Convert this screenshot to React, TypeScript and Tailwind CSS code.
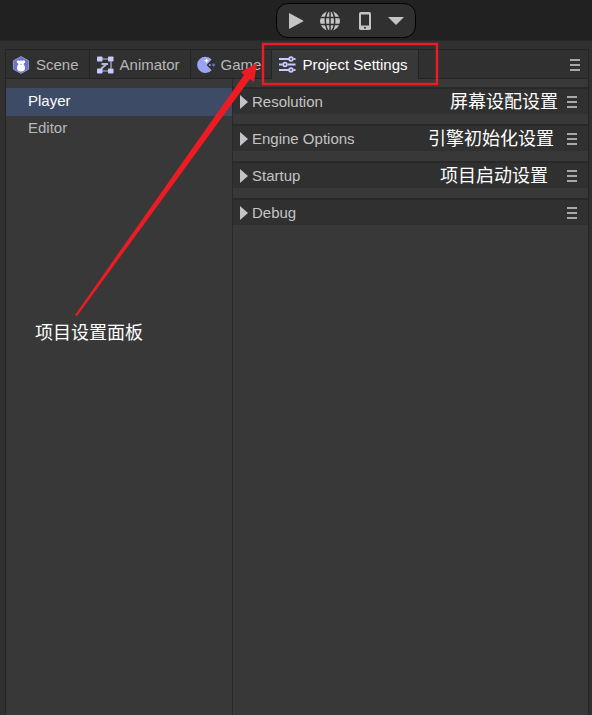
import React, { useState } from "react";

const SceneIcon = () => (
  <svg viewBox="0 0 18 18" className="size-[18px] shrink-0" aria-hidden="true">
    <path d="M9 0.6 16.6 4.8V13.2L9 17.4 1.4 13.2V4.8Z" fill="#6b76c4" stroke="#8f96cf" strokeWidth="1" />
    <circle cx="6.3" cy="5.8" r="1.5" fill="#fff" />
    <circle cx="11.7" cy="5.8" r="1.5" fill="#fff" />
    <circle cx="9" cy="7.4" r="2.9" fill="#fff" />
    <ellipse cx="9" cy="11.8" rx="4" ry="3.8" fill="#fff" />
    <path d="M9 7.4 10 8.6H8Z" fill="#6b76c4" />
  </svg>
);

const AnimatorIcon = () => (
  <svg viewBox="0 0 18 18" className="size-[18px] shrink-0" aria-hidden="true">
    <g stroke="#b6b9dc" strokeWidth="1.2" fill="none">
      <path d="M6 3H12M15 5.5V12.5M6 15H12" />
      <path d="M5.5 8H12M10.5 8 5 13" strokeWidth="1.8" />
    </g>
    <g fill="#c6caff">
      <rect x="1" y="0.5" width="5.5" height="5" rx=".8" />
      <rect x="12" y="0.5" width="5.5" height="5" rx=".8" />
      <rect x="1" y="12.5" width="5.5" height="5" rx=".8" />
      <rect x="12" y="12.5" width="5.5" height="5" rx=".8" />
    </g>
  </svg>
);

const GameIcon = () => (
  <svg viewBox="0 0 18 18" className="size-[18px] shrink-0" aria-hidden="true">
    <path d="M14.6 3.6A8.2 8.2 0 1 0 14.6 14.2L9.6 9Z" fill="#9ba3f5" />
    <path d="M9.5 2 10.2 4.1 12.1 4.8 10.2 5.5 9.5 7.6 8.8 5.5 6.9 4.8 8.8 4.1Z" fill="#fff" />
    <circle cx="12.8" cy="9" r="1" fill="#9ba3f5" />
    <circle cx="16.6" cy="9" r="1.4" fill="#7078b8" />
  </svg>
);

const SlidersIcon = () => (
  <svg viewBox="0 0 18 18" className="size-[18px] shrink-0" aria-hidden="true">
    <g stroke="#c6caff" strokeWidth="1.8" fill="none">
      <path d="M1 3H11M15.5 3H17.5M1 8.5H4.5M9.5 8.5H17.5M1 14H11M15.5 14H17.5" />
      <circle cx="13" cy="3" r="1.8" />
      <circle cx="7" cy="8.5" r="1.8" />
      <circle cx="13" cy="14" r="1.8" />
    </g>
  </svg>
);

const MenuButton = ({ label }: { label: string }) => (
  <button aria-label={label} className="flex size-5 shrink-0 items-center justify-center text-[#cfcfcf]">
    <svg viewBox="0 0 10 12" className="h-3 w-[10px]" stroke="currentColor" strokeWidth="1.6" aria-hidden="true">
      <path d="M0 1H10M0 6H10M0 11H10" />
    </svg>
  </button>
);

const tabs = [
  { name: "Scene", Icon: SceneIcon },
  { name: "Animator", Icon: AnimatorIcon },
  { name: "Game", Icon: GameIcon },
  { name: "Project Settings", Icon: SlidersIcon },
];

const sections = [
  { name: "Resolution", note: "屏幕设配设置", place: "mr-1" },
  { name: "Engine Options", note: "引擎初始化设置", place: "mr-2" },
  { name: "Startup", note: "项目启动设置", place: "mr-3.5" },
  { name: "Debug", note: "", place: "" },
];

function Toolbar() {
  return (
    <header className="flex h-[41px] justify-center border-b border-[#292929] bg-[#212121] pt-[3px] pl-[100px]">
      <div className="flex h-[35px] items-center rounded-xl border border-black bg-[#303030] px-[9px] text-[#c4c4c4]">
        <button aria-label="Play" className="mr-[13px] flex size-5 items-center justify-center">
          <svg viewBox="0 0 16 18" className="h-[18px] w-4" fill="currentColor">
            <path d="M1 1 15 8.5Q15.8 9 15 9.5L1 17Z" />
          </svg>
        </button>
        <button aria-label="Preview in browser" className="mr-[14px] flex size-[22px] items-center justify-center">
          <svg viewBox="0 0 20 20" className="size-5">
            <circle cx="10" cy="10" r="10" fill="currentColor" />
            <g fill="none" stroke="#303030" strokeWidth="1.5">
              <ellipse cx="10" cy="10" rx="4.7" ry="10.5" />
              <path d="M10 0V20M0 6.5H20M0 13.5H20" />
            </g>
          </svg>
        </button>
        <button aria-label="Preview on phone" className="mr-[11px] flex size-5 items-center justify-center">
          <svg viewBox="0 0 12 18" className="h-[18px] w-3">
            <rect width="12" height="18" rx="1.8" fill="currentColor" />
            <path d="M2 2.5H10V13.5H2Z" fill="#303030" />
            <circle cx="6" cy="15.8" r="1" fill="#303030" />
          </svg>
        </button>
        <button aria-label="More previews" className="flex size-5 items-center justify-center">
          <svg viewBox="0 0 16 8" className="h-2 w-4" fill="currentColor">
            <path d="M0 0H16L8 8Z" />
          </svg>
        </button>
      </div>
    </header>
  );
}

export default function App() {
  const [active, setActive] = useState("Project Settings");
  const [page, setPage] = useState("Player");
  return (
    <div className="relative flex min-h-screen flex-col bg-[#303030] font-['Liberation_Sans','Noto_Sans_CJK_SC',sans-serif] text-[15px] leading-5 text-[#b8b8b8]">
      <Toolbar />
      <main className="mr-[3px] ml-[5px] mt-2 flex flex-1 flex-col border-x border-t border-[#242424]">
        <div className="flex h-[29px] bg-[#303030]">
          <nav className="flex">
            {tabs.map(({ name, Icon }) => (
              <button
                key={name}
                onClick={() => setActive(name)}
                className={
                  "flex items-center gap-[6px] border-r border-[#242424] pr-[10px] pl-[6px] whitespace-nowrap " +
                  (active === name ? "bg-[#383838] text-white" : "border-b pt-px")
                }
              >
                <Icon />
                {name}
              </button>
            ))}
          </nav>
          <div className="flex flex-1 items-center justify-end border-b border-[#242424] pt-px pr-[3px]">
            <MenuButton label="Panel menu" />
          </div>
        </div>
        <div className="flex flex-1 bg-[#383838]">
          <aside className="flex w-[227px] shrink-0 flex-col border-r border-[#292929] pt-[9px]">
            {["Player", "Editor"].map((name) => (
              <button
                key={name}
                onClick={() => setPage(name)}
                className={
                  "flex items-center pl-[22px] " +
                  (page === name ? "h-7 bg-[#3d4b66] pb-0.5 text-white" : "h-6")
                }
              >
                {name}
              </button>
            ))}
          </aside>
          <div className="flex min-w-0 flex-1 flex-col gap-[10px] pt-2">
            {sections.map(({ name, note, place }) => (
              <section
                key={name}
                className="flex h-[27px] items-center border-t-2 border-[#292929] bg-[#303030] pr-[6px] pl-[7px]"
              >
                <button className="flex flex-1 items-center gap-1 text-left text-[#c4c4c4]">
                  <svg viewBox="0 0 8 14" className="h-[14px] w-2" fill="currentColor" aria-hidden="true">
                    <path d="M0 0 8 7 0 14Z" />
                  </svg>
                  {name}
                </button>
                <span className={"text-lg leading-6 text-white " + place}>{note}</span>
                <MenuButton label={name + " menu"} />
              </section>
            ))}
          </div>
        </div>
      </main>
      <p className="absolute top-[321px] left-[35px] text-lg leading-6 text-white">项目设置面板</p>
      <svg className="pointer-events-none absolute top-0 left-0" width="450" height="330" aria-hidden="true">
        <rect x="263" y="44" width="174" height="40" fill="none" stroke="#ed1c24" strokeWidth="2.4" />
        <path d="M75 315 244 75 241 72 257 63 254 82 250 79 77 316Z" fill="#ed1c24" />
      </svg>
    </div>
  );
}
